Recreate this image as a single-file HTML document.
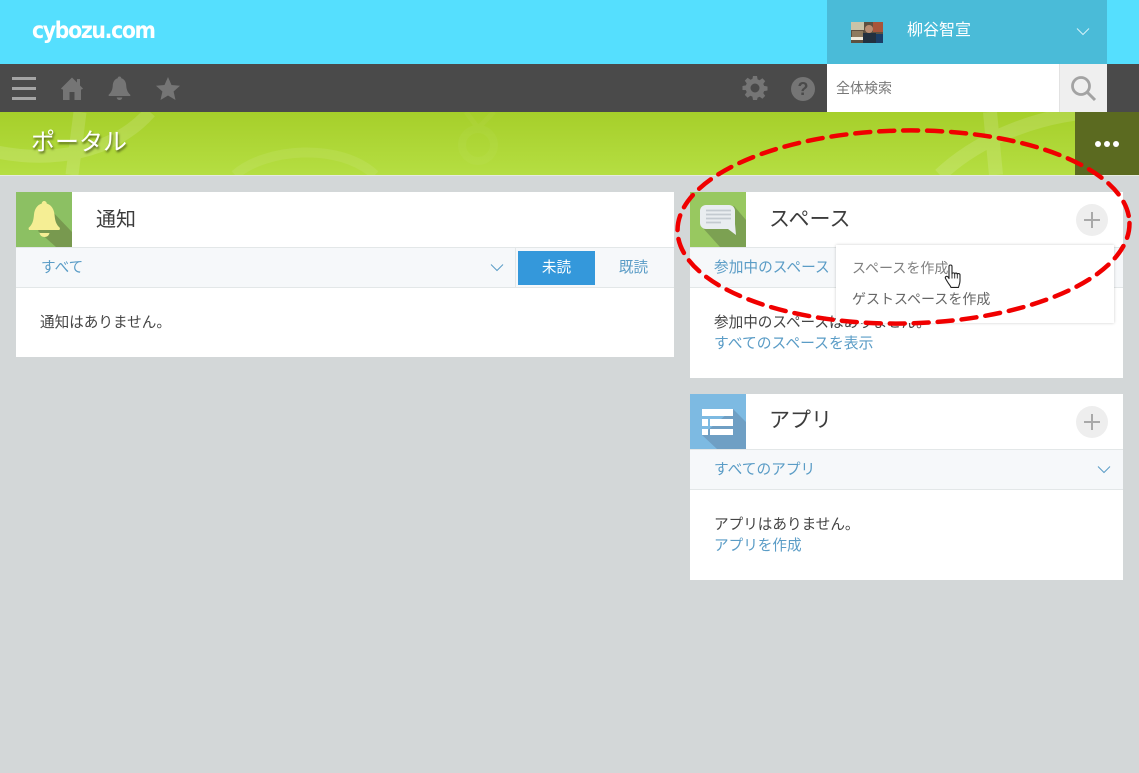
<!DOCTYPE html>
<html lang="ja"><head><meta charset="utf-8"><title>ポータル</title>
<style>
html,body{margin:0;padding:0;width:1139px;height:773px;overflow:hidden;background:#d3d7d8}
body{position:relative;font-family:"Liberation Sans","Noto Sans CJK JP",sans-serif;font-size:14.6px;color:#444}
.a{position:absolute;white-space:nowrap}
.card{position:absolute;background:#fff}
.bar{position:absolute;left:0;right:0;height:39px;background:#f6f8fa;border-top:1px solid #e3e7e8;border-bottom:1px solid #e3e7e8}
.title{position:absolute;font-size:20px;line-height:28px;color:#3c3c3c;white-space:nowrap}
.link{color:#5a9cc6}
svg{position:absolute;display:block}
.plus{position:absolute;width:32px;height:32px;border-radius:50%;background:#eeeeee}
.plus:before{content:"";position:absolute;left:8px;top:15px;width:16px;height:2px;background:#a9a9a9}
.plus:after{content:"";position:absolute;left:15px;top:8px;width:2px;height:16px;background:#a9a9a9}
</style></head><body>

<div class="a" style="left:0;top:0;width:1139px;height:64px;background:#55dffe"></div>
<div class="a" style="left:32px;top:15px;font-size:23px;line-height:32px;font-weight:700;color:#fff;font-family:'DejaVu Sans',sans-serif;letter-spacing:-1.5px;transform-origin:left center;transform:scaleX(.89)">cybozu.com</div>

<div class="a" style="left:827px;top:0;width:280px;height:64px;background:#4abbd8"></div>
<svg style="left:851px;top:22px" width="32" height="21" viewBox="0 0 32 21">
<rect width="32" height="21" fill="#5e5040"/><rect x="0" y="0" width="13" height="8" fill="#c9c3a8"/><rect x="1" y="9" width="11" height="6" fill="#8d7a5e"/><rect x="0" y="15" width="12" height="3" fill="#f0ebdd"/><rect x="22" y="0" width="10" height="10" fill="#a8553a"/><circle cx="18" cy="7" r="4" fill="#b98d72"/><rect x="12" y="11" width="13" height="10" fill="#22303f"/><rect x="25" y="12" width="7" height="9" fill="#1b3d66"/>
</svg>
<div class="a" style="left:907px;top:20px;font-size:16px;line-height:22px;color:#fff">柳谷智宣</div>
<svg style="left:1076px;top:27px" width="14" height="9" viewBox="0 0 14 9"><path d="M1 1.500l6 6 6-6" fill="none" stroke="#d5f2f8" stroke-width="1"/></svg>

<div class="a" style="left:0;top:64px;width:1139px;height:48px;background:#4a4a4a"></div>
<div class="a" style="left:12px;top:77px;width:24px;height:3px;background:#a5a5a5"></div>
<div class="a" style="left:12px;top:87px;width:24px;height:3px;background:#a5a5a5"></div>
<div class="a" style="left:12px;top:97px;width:24px;height:3px;background:#a5a5a5"></div>
<svg style="left:60px;top:76px" width="24" height="24" viewBox="0 0 24 24"><path d="M12 1.500L1 12.500l1.300 1.300L3 13v11h6.500v-8h5v8H21V13l.7.8 1.300-1.300-3-3V3h-3v3.500z" fill="#757575"/></svg>
<svg style="left:107px;top:75px" width="25" height="26" viewBox="0 0 25 26"><path d="M12.500 1.500c1.200 0 1.800.8 1.800 1.800 3.200.9 4.700 3.700 4.900 7 .2 4.200 1.300 7 4.300 9.700l-.4 1H1.900l-.4-1c3-2.700 4.100-5.500 4.300-9.700.2-3.300 1.700-6.100 4.900-7 0-1 .6-1.800 1.800-1.800z" fill="#757575"/><path d="M9.700 22.500h5.600c-.2 1.500-1.400 2.500-2.800 2.500s-2.600-1-2.800-2.500z" fill="#757575"/></svg>
<svg style="left:155px;top:76px" width="26" height="25" viewBox="0 0 26 25"><path d="M13 1l3.500 8 8.500.8-6.400 5.700 1.900 8.500L13 19.500 5.500 24l1.900-8.500L1 9.800 9.500 9z" fill="#757575"/></svg>
<svg style="left:742px;top:75px" width="26" height="26" viewBox="0 0 26 26"><path fill-rule="evenodd" fill="#757575" d="M11 1h4l.6 3.400 2 .8L20.400 3.300l2.800 2.800-1.900 2.800.8 2 3.400.6v4l-3.400.6-.8 2 1.900 2.800-2.800 2.800-2.800-1.900-2 .8L15 25h-4l-.6-3.400-2-.8-2.800 1.900-2.800-2.800 1.900-2.800-.8-2L.5 15v-4l3.400-.6.800-2-1.900-2.800 2.800-2.800 2.800 1.900 2-.8zM13 8.500a4.500 4.500 0 1 0 0 9 4.500 4.500 0 0 0 0-9z"/></svg>
<div class="a" style="left:791px;top:77px;width:24px;height:24px;border-radius:50%;background:#757575;color:#4a4a4a;font-size:18px;font-weight:700;line-height:24px;text-align:center">?</div>

<div class="a" style="left:827px;top:64px;width:232px;height:48px;background:#fff"></div>
<div class="a" style="left:836px;top:78px;font-size:14px;line-height:20px;color:#777">全体検索</div>
<div class="a" style="left:1059px;top:64px;width:48px;height:48px;background:#efefef;border-left:1px solid #e2e2e2;box-sizing:border-box"></div>
<svg style="left:1070px;top:75px" width="27" height="27" viewBox="0 0 27 27"><circle cx="11" cy="11" r="8.500" fill="none" stroke="#a3a3a3" stroke-width="2.800"/><path d="M17 17l8 8" stroke="#a3a3a3" stroke-width="3"/></svg>

<svg style="left:0;top:112px" width="1139" height="63" viewBox="0 0 1139 63">
<defs><linearGradient id="g" x1="0" y1="0" x2="0" y2="1"><stop offset="0" stop-color="#a6cf2a"/><stop offset="1" stop-color="#b5de42"/></linearGradient></defs>
<rect width="1139" height="63" fill="url(#g)"/>
<g fill="none" stroke="#fff" opacity=".13">
<path d="M80 0L72 63" stroke-width="13"/>
<path d="M-20 36C50 55 115 40 150 0" stroke-width="13"/>
<path d="M940 63C975 30 1030 5 1090 0" stroke-width="14"/>
<path d="M990 0L996 63" stroke-width="14"/>
</g>
<path d="M235 63C265 36 340 30 375 63" fill="none" stroke="#fff" stroke-width="10" opacity=".08"/>
<g fill="none" stroke="#fff" opacity=".03"><circle cx="478" cy="33" r="16" stroke-width="8"/><path d="M478 16L494 0M478 16L466 0" stroke-width="5"/></g></svg>
<div class="a" style="left:0;top:175px;width:1139px;height:1px;background:#e6ebe0"></div>
<div class="a" style="left:31px;top:126px;font-size:24px;line-height:34px;color:#fff;text-shadow:1px 2px 2px rgba(60,70,20,.75)">ポータル</div>
<div class="a" style="left:1075px;top:112px;width:64px;height:63px;background:#5b6a20"></div>
<div class="a" style="left:1095px;top:141px;width:6px;height:6px;border-radius:50%;background:#fff"></div>
<div class="a" style="left:1104px;top:141px;width:6px;height:6px;border-radius:50%;background:#fff"></div>
<div class="a" style="left:1113px;top:141px;width:6px;height:6px;border-radius:50%;background:#fff"></div>

<!-- 通知 -->
<div class="card" style="left:16px;top:192px;width:658px;height:165px">
<svg style="left:0;top:0" width="56" height="55" viewBox="0 0 56 55"><rect width="56" height="55" fill="#8cc063"/><path d="M34 17L56 40V55H40L22 39z" fill="#78994f"/><path d="M28 9c1.700 0 2.700 1.200 2.700 2.500 5 1.500 7.300 6 7.800 11 .5 6 1.500 10 5.500 13.500l-.5 2H13l-.5-2c4-3.500 5-7.500 5.500-13.500.5-5 2.800-9.500 7.800-11C25.800 10.200 26.800 9 28 9z" fill="#f5ee94"/><path d="M23.500 41h10c-.5 2.500-2.500 4-5 4s-4.500-1.500-5-4z" fill="#f5ee94"/></svg>
<div class="title" style="left:80px;top:14px">通知</div>
<div class="bar" style="top:55px"></div>
<div class="a link" style="left:25px;top:66px;line-height:20px">すべて</div>
<svg style="left:474px;top:71px" width="14" height="9" viewBox="0 0 14 9"><path d="M1 1.500l6 6 6-6" fill="none" stroke="#5a9cc6" stroke-width="1"/></svg>
<div class="a" style="left:499px;top:56px;width:1px;height:39px;background:#e3e7e8"></div>
<div class="a" style="left:502px;top:59px;width:77px;height:34px;background:#3498db;color:#fff;text-align:center;line-height:35px">未読</div>
<div class="a link" style="left:579px;top:59px;width:77px;text-align:center;line-height:35px">既読</div>
<div class="a" style="left:24px;top:121px;line-height:20px">通知はありません。</div>
</div>

<!-- スペース -->
<div class="card" style="left:690px;top:192px;width:433px;height:186px">
<svg style="left:0;top:0" width="56" height="55" viewBox="0 0 56 55"><rect width="56" height="55" fill="#98c860"/><path d="M44 14L56 28V55H30L12 35z" fill="#7ca152"/><path d="M16 13h23a6 6 0 0 1 6 6v13l1 11-8-6H16a6 6 0 0 1-6-6V19a6 6 0 0 1 6-6z" fill="#e9edf0"/><path d="M16 18.500h25M16 22.500h25M16 26.500h25M16 30.500h15" stroke="#c3cad0" stroke-width="1.800"/></svg>
<div class="title" style="left:79px;top:14px;font-size:21px">スペース</div>
<div class="plus" style="left:386px;top:12px"></div>
<div class="bar" style="top:55px"></div>
<div class="a link" style="left:24px;top:66px;line-height:20px;font-size:14.7px">参加中のスペース</div>
<div class="a" style="left:24px;top:121px;line-height:20px">参加中のスペースはありません。</div>
<div class="a link" style="left:24px;top:142px;line-height:20px;font-size:14.8px">すべてのスペースを表示</div>
</div>

<!-- メニュー -->
<div class="a" style="left:836px;top:245px;width:278px;height:78px;background:#fff;box-shadow:0 0 3px rgba(0,0,0,.2)"></div>
<div class="a" style="left:852px;top:258px;font-size:14px;line-height:20px;color:#808080">スペースを作成</div>
<div class="a" style="left:852px;top:289px;font-size:14px;line-height:20px;color:#666">ゲストスペースを作成</div>
<svg style="left:944px;top:264px" width="20" height="25" viewBox="0 0 20 25"><path d="M5 2.500c0-2 3-2 3 0V10c0-1.500 2.700-1.500 2.700 0 0-1.300 2.600-1.300 2.600.3 0-1.200 2.700-1 2.700.6v6c0 3-1.500 5.500-1.500 6.500H7c-.5-1.500-2-3-3.500-5.500L1.500 14.500c-.8-1.800 1.300-3 2.500-1.500L5 14.500z" fill="#fff" stroke="#222" stroke-width="1.100" stroke-linejoin="round"/><path d="M8 10v4.500M10.700 10v4.500M13.300 10.500v4" stroke="#222" stroke-width=".9"/></svg>

<!-- アプリ -->
<div class="card" style="left:690px;top:394px;width:433px;height:186px">
<svg style="left:0;top:0" width="56" height="55" viewBox="0 0 56 55"><rect width="56" height="55" fill="#7dbae2"/><path d="M43 15L56 28V55H27L12 41z" fill="#6f9fc4"/><path fill="#fff" d="M12 15h31v7H12zM12 25h6v7h-6zM20 25h23v7H20zM12 35h6v6h-6zM20 35h23v6H20z"/></svg>
<div class="title" style="left:79px;top:13px;font-size:21px">アプリ</div>
<div class="plus" style="left:386px;top:12px"></div>
<div class="bar" style="top:55px"></div>
<div class="a link" style="left:24px;top:66px;line-height:20px;font-size:14.7px">すべてのアプリ</div>
<svg style="left:407px;top:71px" width="14" height="9" viewBox="0 0 14 9"><path d="M1 1.500l6 6 6-6" fill="none" stroke="#5a9cc6" stroke-width="1"/></svg>
<div class="a" style="left:24px;top:121px;line-height:20px">アプリはありません。</div>
<div class="a link" style="left:24px;top:142px;line-height:20px">アプリを作成</div>
</div>

<!-- 赤い楕円 -->
<svg style="left:0;top:0" width="1139" height="773" viewBox="0 0 1139 773"><ellipse cx="903.500" cy="227" rx="226" ry="96.500" transform="rotate(-1 903.500 227)" fill="none" stroke="#f00000" stroke-width="4.500" stroke-dasharray="15 9" stroke-linecap="round"/></svg>
</body></html>
